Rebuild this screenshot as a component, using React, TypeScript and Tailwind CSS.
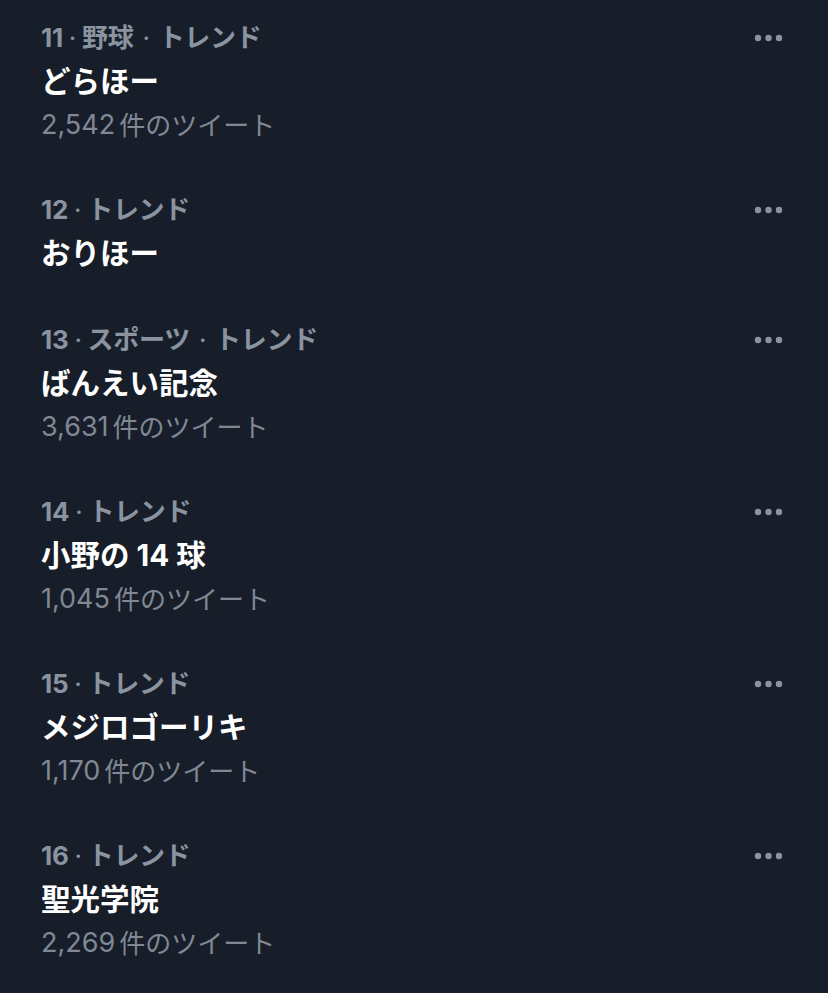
type Trend = {
  rank: number
  category?: string
  title: string
  count?: string
}

const trends: Trend[] = [
  { rank: 11, category: '野球', title: 'どらほー', count: '2,542' },
  { rank: 12, title: 'おりほー' },
  { rank: 13, category: 'スポーツ', title: 'ばんえい記念', count: '3,631' },
  { rank: 14, title: '小野の 14 球', count: '1,045' },
  { rank: 15, title: 'メジロゴーリキ', count: '1,170' },
  { rank: 16, title: '聖光学院', count: '2,269' },
]

function Dots() {
  return (
    <svg width="30" height="8" viewBox="0 0 30 8" className="fill-[#8a94a0]">
      <circle cx="4" cy="4" r="3.2" />
      <circle cx="14.5" cy="4" r="3.2" />
      <circle cx="25" cy="4" r="3.2" />
    </svg>
  )
}

export default function App() {
  return (
    <div className="min-h-[993px] w-full bg-[#171e29] pt-px font-['Inter','Noto_Sans_CJK_JP',sans-serif]">
      <ul className="flex flex-col">
        {trends.map(({ rank, category, title, count }) => (
          <li key={rank} className="flex pl-[41px] pr-[44px] pt-[15px] pb-[27px]">
            <div className="flex flex-1 flex-col">
              <div className="flex h-[43px] items-center text-[26px] font-bold tracking-[-0.3px] text-[#8a94a0]">
                <span>{rank}</span>
                <span className="mx-[6px] font-normal">·</span>
                {category && (
                  <>
                    <span>{category}</span>
                    <span className="mx-[9px] font-normal">·</span>
                  </>
                )}
                <span>トレンド</span>
              </div>
              <div className="flex h-[45px] items-center text-[29.5px] font-bold text-white">
                {title}
              </div>
              {count && (
                <div className="flex h-[42px] items-center text-[26px] text-[#7f8894]">
                  <span className="text-[27px]">{count}</span>
                  <span className="ml-[4px]">件のツイート</span>
                </div>
              )}
            </div>
            <div className="flex h-[43px] items-center">
              <Dots />
            </div>
          </li>
        ))}
      </ul>
    </div>
  )
}
